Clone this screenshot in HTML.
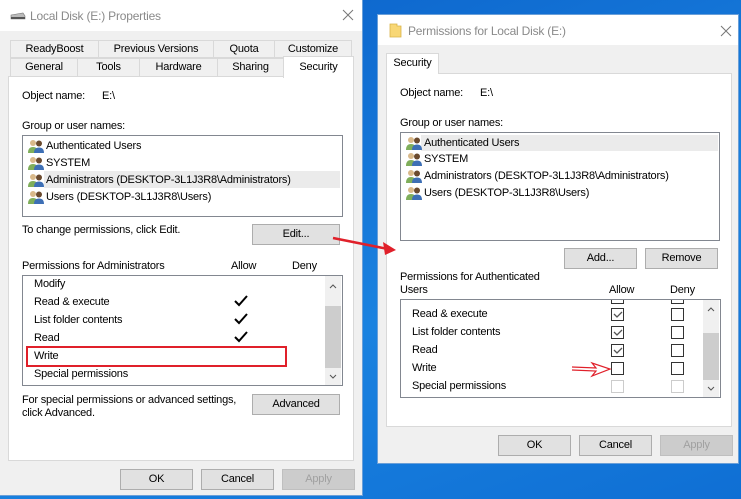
<!DOCTYPE html><html><head><style>
*{margin:0;padding:0;box-sizing:border-box}
body{width:741px;height:499px;overflow:hidden;background:linear-gradient(160deg,#0a5fc8,#1a82e0 60%,#0f6fd4);font-family:"Liberation Sans",sans-serif;font-size:11px;letter-spacing:-0.2px;color:#000;position:relative}
.a{position:absolute;white-space:nowrap}
.win{position:absolute;background:#f0f0f0;border:1px solid #6a9fd8}
.tb{position:absolute;background:#fff}
.tab{position:absolute;background:#f0f0f0;border:1px solid #d9d9d9;text-align:center;line-height:16px}
.panel{position:absolute;background:#fff;border:1px solid #d9d9d9}
.box{position:absolute;background:#fff;border:1px solid #828790}
.btn{position:absolute;background:#e1e1e1;border:1px solid #adadad;text-align:center;line-height:19px}
.dis{color:#a0a0a0;border-color:#bfbfbf;background:#ccc}
.sb{position:absolute;background:#f0f0f0}
.th{position:absolute;background:#cdcdcd}
.cb{position:absolute;width:13px;height:13px;border:1px solid #333;background:#fff}
.cbd{border-color:#ccc}
.u{position:absolute;width:16px;height:14px}
.x{position:absolute}
</style></head><body>
<svg width="0" height="0" style="position:absolute"><defs><g id="us"><circle cx="5" cy="4" r="3" fill="#d9b98a"/><path d="M0 14 Q0 8 5 8 Q10 8 10 14Z" fill="#7fae5a"/><circle cx="11" cy="4.5" r="3" fill="#6b4a2e"/><path d="M6 14 Q6 8.5 11 8.5 Q16 8.5 16 14Z" fill="#3d6fb5"/></g></defs></svg>

<!-- LEFT WINDOW -->
<div class="win" style="left:-1px;top:-1px;width:364px;height:497px"></div>
<div class="tb" style="left:0;top:0;width:362px;height:31px"></div>
<svg class="a" style="left:10px;top:12px" width="16" height="8"><path d="M1 3 L13 1 L15 4 L15 7 L1 7Z" fill="#bbb" stroke="#777" stroke-width=".6"/><rect x="1" y="5" width="14" height="2" fill="#555"/></svg>
<div class="a" style="left:30px;top:9px;font-size:12px;color:#8a8a8a">Local Disk (E:) Properties</div>
<svg class="x" style="left:342px;top:9px" width="12" height="12"><path d="M1 1L11 11M11 1L1 11" stroke="#777" stroke-width="1"/></svg>
<div class="tab" style="left:10px;top:40px;width:89px;height:18px">ReadyBoost</div>
<div class="tab" style="left:98px;top:40px;width:116px;height:18px">Previous Versions</div>
<div class="tab" style="left:213px;top:40px;width:62px;height:18px">Quota</div>
<div class="tab" style="left:274px;top:40px;width:78px;height:18px">Customize</div>
<div class="panel" style="left:8px;top:76px;width:346px;height:385px"></div>
<div class="tab" style="left:10px;top:58px;width:68px;height:19px">General</div>
<div class="tab" style="left:77px;top:58px;width:63px;height:19px">Tools</div>
<div class="tab" style="left:139px;top:58px;width:79px;height:19px">Hardware</div>
<div class="tab" style="left:217px;top:58px;width:67px;height:19px">Sharing</div>
<div class="tab" style="left:283px;top:56px;width:71px;height:22px;background:#fff;border-bottom:none;line-height:20px">Security</div>
<div class="a" style="left:22px;top:90px">Object name:</div><div class="a" style="left:102px;top:90px">E:\</div>
<div class="a" style="left:22px;top:120px">Group or user names:</div>
<div class="box" style="left:22px;top:135px;width:321px;height:82px"></div>
<div class="a" style="left:44px;top:171px;width:296px;height:17px;background:#ebebeb"></div>
<svg class="u" style="left:28px;top:139px"><use href="#us"/></svg>
<svg class="u" style="left:28px;top:156px"><use href="#us"/></svg>
<svg class="u" style="left:28px;top:173px"><use href="#us"/></svg>
<svg class="u" style="left:28px;top:190px"><use href="#us"/></svg>
<div class="a" style="left:46px;top:140px">Authenticated Users</div>
<div class="a" style="left:46px;top:157px">SYSTEM</div>
<div class="a" style="left:46px;top:174px">Administrators (DESKTOP-3L1J3R8\Administrators)</div>
<div class="a" style="left:46px;top:191px">Users (DESKTOP-3L1J3R8\Users)</div>
<div class="a" style="left:22px;top:224px">To change permissions, click Edit.</div>
<div class="btn" style="left:252px;top:224px;width:88px;height:21px">Edit...</div>
<div class="a" style="left:22px;top:260px">Permissions for Administrators</div>
<div class="a" style="left:231px;top:260px">Allow</div><div class="a" style="left:292px;top:260px">Deny</div>
<div class="box" style="left:22px;top:275px;width:321px;height:111px"></div>
<div class="sb" style="left:325px;top:276px;width:16px;height:109px"></div>
<div class="th" style="left:325px;top:306px;width:16px;height:62px"></div>
<svg class="x" style="left:329px;top:284px" width="8" height="5"><path d="M1 4L4 1L7 4" fill="none" stroke="#555"/></svg>
<svg class="x" style="left:329px;top:374px" width="8" height="5"><path d="M1 1L4 4L7 1" fill="none" stroke="#555"/></svg>
<div class="a" style="left:34px;top:278px">Modify</div>
<div class="a" style="left:34px;top:296px">Read &amp; execute</div>
<div class="a" style="left:34px;top:314px">List folder contents</div>
<div class="a" style="left:34px;top:332px">Read</div>
<div class="a" style="left:34px;top:350px">Write</div>
<div class="a" style="left:34px;top:368px">Special permissions</div>
<svg class="a" style="left:233px;top:295px" width="16" height="50"><g fill="none" stroke="#000" stroke-width="2"><path d="M2 6 L6 10 L14 1"/><path d="M2 24 L6 28 L14 19"/><path d="M2 42 L6 46 L14 37"/></g></svg>
<div class="a" style="left:26px;top:346px;width:261px;height:21px;border:2px solid #e0202a"></div>
<div class="a" style="left:22px;top:394px">For special permissions or advanced settings,</div>
<div class="a" style="left:22px;top:407px">click Advanced.</div>
<div class="btn" style="left:252px;top:394px;width:88px;height:21px">Advanced</div>
<div class="btn" style="left:120px;top:469px;width:73px;height:21px">OK</div>
<div class="btn" style="left:201px;top:469px;width:73px;height:21px">Cancel</div>
<div class="btn dis" style="left:282px;top:469px;width:73px;height:21px">Apply</div>

<!-- RIGHT WINDOW -->
<div class="win" style="left:377px;top:14px;width:362px;height:450px"></div>
<div class="tb" style="left:378px;top:15px;width:360px;height:30px"></div>
<svg class="a" style="left:389px;top:23px" width="13" height="15"><path d="M1 1 L8 1 L8 3 L12 3 L12 14 L1 14Z" fill="#f8d775" stroke="#d9b449" stroke-width=".8"/></svg>
<div class="a" style="left:408px;top:24px;font-size:12px;color:#8a8a8a">Permissions for Local Disk (E:)</div>
<svg class="x" style="left:720px;top:25px" width="12" height="12"><path d="M1 1L11 11M11 1L1 11" stroke="#777" stroke-width="1"/></svg>
<div class="panel" style="left:386px;top:73px;width:346px;height:354px"></div>
<div class="tab" style="left:386px;top:53px;width:53px;height:21px;background:#fff;border-bottom:none;line-height:19px">Security</div>
<div class="a" style="left:400px;top:87px">Object name:</div><div class="a" style="left:480px;top:87px">E:\</div>
<div class="a" style="left:400px;top:117px">Group or user names:</div>
<div class="box" style="left:400px;top:132px;width:320px;height:109px"></div>
<div class="a" style="left:421px;top:135px;width:297px;height:16px;background:#ebebeb"></div>
<svg class="u" style="left:406px;top:136px"><use href="#us"/></svg>
<svg class="u" style="left:406px;top:152px"><use href="#us"/></svg>
<svg class="u" style="left:406px;top:169px"><use href="#us"/></svg>
<svg class="u" style="left:406px;top:186px"><use href="#us"/></svg>
<div class="a" style="left:424px;top:137px">Authenticated Users</div>
<div class="a" style="left:424px;top:153px">SYSTEM</div>
<div class="a" style="left:424px;top:170px">Administrators (DESKTOP-3L1J3R8\Administrators)</div>
<div class="a" style="left:424px;top:187px">Users (DESKTOP-3L1J3R8\Users)</div>
<div class="btn" style="left:564px;top:248px;width:73px;height:21px">Add...</div>
<div class="btn" style="left:645px;top:248px;width:73px;height:21px">Remove</div>
<div class="a" style="left:400px;top:271px">Permissions for Authenticated</div>
<div class="a" style="left:400px;top:284px">Users</div>
<div class="a" style="left:609px;top:284px">Allow</div><div class="a" style="left:670px;top:284px">Deny</div>
<div class="box" style="left:400px;top:299px;width:321px;height:99px;overflow:hidden"></div>
<div class="a" style="left:611px;top:300px;width:13px;height:4px;border:1px solid #333;border-top:none;background:#fff"></div>
<div class="a" style="left:671px;top:300px;width:13px;height:4px;border:1px solid #333;border-top:none;background:#fff"></div>
<div class="sb" style="left:703px;top:300px;width:16px;height:97px"></div>
<div class="th" style="left:703px;top:333px;width:16px;height:47px"></div>
<svg class="x" style="left:707px;top:307px" width="8" height="5"><path d="M1 4L4 1L7 4" fill="none" stroke="#555"/></svg>
<svg class="x" style="left:707px;top:386px" width="8" height="5"><path d="M1 1L4 4L7 1" fill="none" stroke="#555"/></svg>
<div class="a" style="left:412px;top:308px">Read &amp; execute</div>
<div class="a" style="left:412px;top:326px">List folder contents</div>
<div class="a" style="left:412px;top:344px">Read</div>
<div class="a" style="left:412px;top:362px">Write</div>
<div class="a" style="left:412px;top:380px">Special permissions</div>
<div class="cb" style="left:611px;top:308px"></div><div class="cb" style="left:671px;top:308px"></div>
<div class="cb" style="left:611px;top:326px"></div><div class="cb" style="left:671px;top:326px"></div>
<div class="cb" style="left:611px;top:344px"></div><div class="cb" style="left:671px;top:344px"></div>
<div class="cb" style="left:611px;top:362px"></div><div class="cb" style="left:671px;top:362px"></div>
<div class="cb cbd" style="left:611px;top:380px"></div><div class="cb cbd" style="left:671px;top:380px"></div>
<svg class="a" style="left:612px;top:309px" width="12" height="48"><g fill="none" stroke="#555" stroke-width="1.3"><path d="M2 5 L5 8 L10 3"/><path d="M2 23 L5 26 L10 21"/><path d="M2 41 L5 44 L10 39"/></g></svg>
<svg class="a" style="left:570px;top:360px" width="42" height="18"><path d="M2 7 L26 8 L22 3 L40 9 L22 16 L26 11 L2 10" fill="none" stroke="#e0202a" stroke-width="1.2"/></svg>
<div class="btn" style="left:498px;top:435px;width:73px;height:21px">OK</div>
<div class="btn" style="left:579px;top:435px;width:73px;height:21px">Cancel</div>
<div class="btn dis" style="left:660px;top:435px;width:73px;height:21px">Apply</div>

<!-- arrow -->
<svg class="a" style="left:330px;top:230px" width="70" height="30"><path d="M3 8 L58 19" stroke="#e0202a" stroke-width="2.5"/><path d="M66 20 L53 12 L55 25Z" fill="#e0202a"/></svg>
</body></html>
